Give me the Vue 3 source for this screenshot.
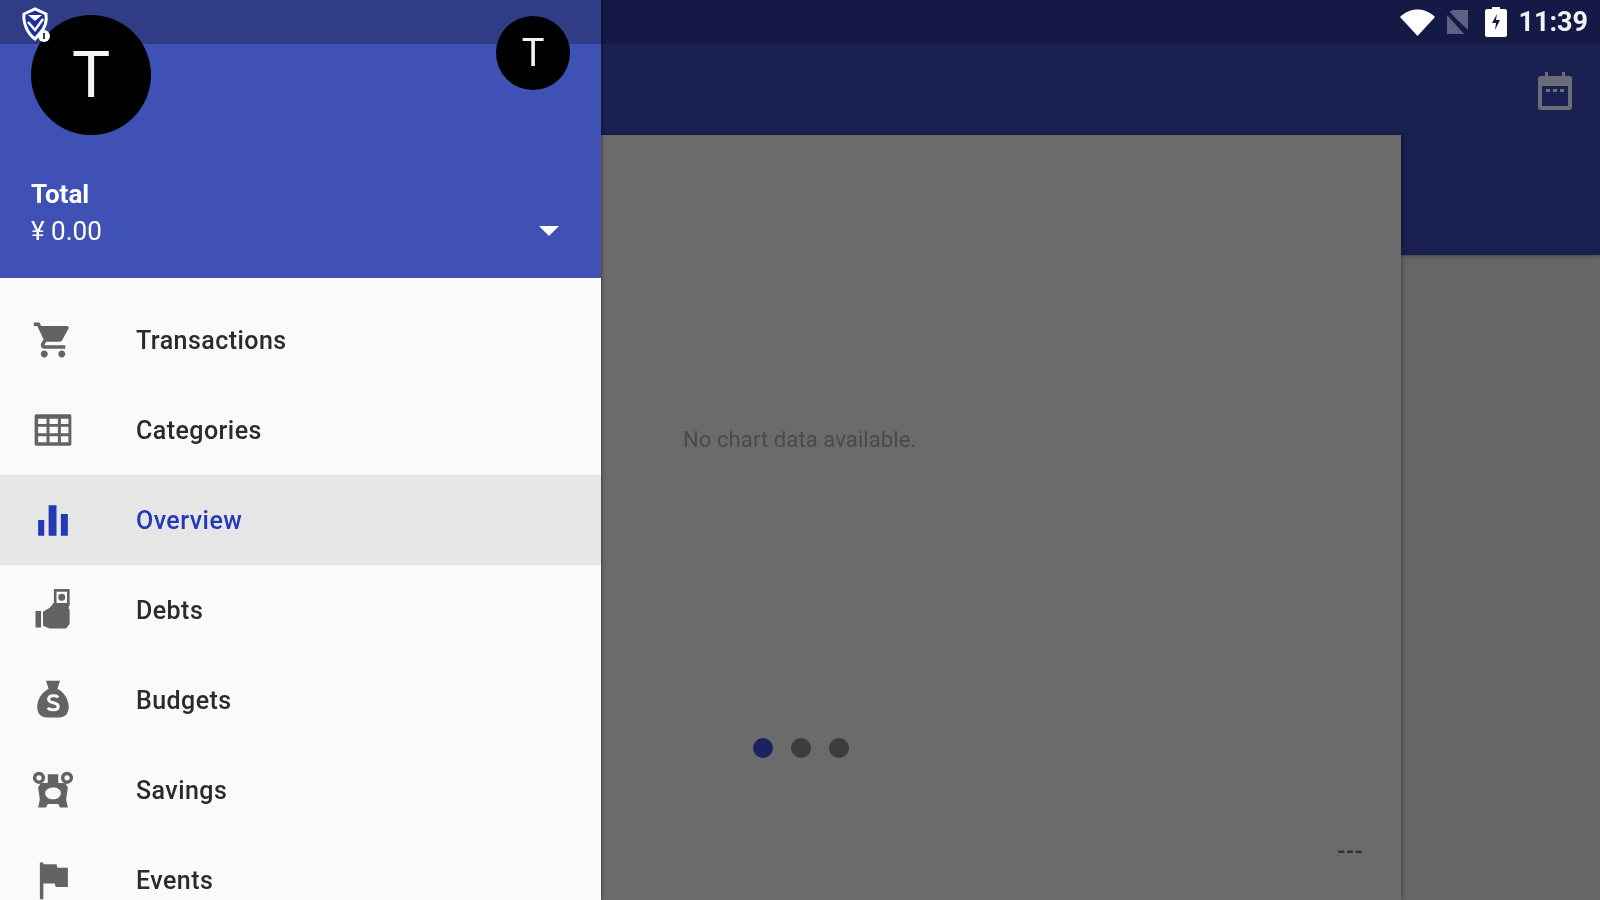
<script setup>
const menu = [
  { label: 'Transactions', icon: 'cart' },
  { label: 'Categories', icon: 'grid' },
  { label: 'Overview', icon: 'bars', active: true },
  { label: 'Debts', icon: 'debt' },
  { label: 'Budgets', icon: 'bag' },
  { label: 'Savings', icon: 'piggy' },
  { label: 'Events', icon: 'flag' }
];
</script>

<template>
  <div class="screen">
    <aside class="drawer">
      <header class="drawer-head">
        <div class="drawer-status"></div>
        <svg class="shield" viewBox="0 0 30 36">
          <path d="M4 7 15 2l11 5c1 7-1 14-6 19l-5 6C8 27 3 17 4 7z" fill="#1f2f9a" stroke="#fff" stroke-width="3" />
          <path d="M8 8h14l-7 6z" fill="#fff" />
          <path d="M8 15l7 8 8-11" fill="none" stroke="#fff" stroke-width="2.500" />
          <circle cx="24" cy="29" r="6" fill="#fff" />
          <path d="M24 26v6" stroke="#1f2f9a" stroke-width="2" />
        </svg>
        <div class="avatars">
          <div class="avatar big">T</div>
          <div class="avatar small">T</div>
        </div>
        <div class="account">
          <div>
            <div class="account-name">Total</div>
            <div class="account-sum">¥ 0.00</div>
          </div>
          <span class="caret"></span>
        </div>
      </header>

      <nav class="menu">
        <div v-for="item in menu" :key="item.label" class="menu-row" :class="{ active: item.active }">
          <svg class="menu-icon" viewBox="0 0 24 24">
            <path v-if="item.icon === 'cart'" d="M7 18c-1.100 0-1.990.9-1.990 2S5.900 22 7 22s2-.9 2-2-.9-2-2-2zM1 2v2h2l3.600 7.590-1.350 2.450c-.16.280-.25.610-.25.960 0 1.100.9 2 2 2h12v-2H7.420c-.14 0-.25-.11-.25-.25l.03-.12.9-1.630h7.450c.75 0 1.410-.41 1.750-1.030l3.580-6.490c.08-.14.120-.31.120-.48 0-.55-.45-1-1-1H5.210l-.94-2H1zm16 16c-1.100 0-1.990.9-1.990 2s.89 2 1.990 2 2-.9 2-2-.9-2-2-2z" />
            <path v-else-if="item.icon === 'grid'" fill-rule="evenodd" d="M2.500 3h19c.6 0 1 .4 1 1v16c0 .6-.4 1-1 1h-19c-.6 0-1-.4-1-1V4c0-.6.4-1 1-1zM3.500 8.500h4.800V5.500H3.500zm6.500 0h4.800V5.500H10zm6.500 0h4.300V5.500h-4.300zM3.500 13.800h4.800v-3.600H3.500zm6.500 0h4.800v-3.600H10zm6.500 0h4.300v-3.600h-4.300zM3.500 19h4.800v-3.500H3.500zm6.500 0h4.800v-3.500H10zm6.500 0h4.300v-3.500h-4.300z" />
            <path v-else-if="item.icon === 'bars'" d="M3.500 12H7v9H3.500zM9.500 3.500H14V21H9.500zM16.500 8.500h4V21h-4z" />
            <template v-else-if="item.icon === 'debt'">
              <path d="M2 12.500h3.200V22H2zM6.300 13l4-2.500 2-2.500h8.700v3l.5 1v8l-2 2.500H10l-3.700-1.500z" />
              <path fill-rule="evenodd" d="M12.500 0h9v9.500h-9zM14 1.500V8h6V1.500zm3 1.200a2 2 0 1 1 0 4 2 2 0 0 1 0-4z" />
            </template>
            <template v-else-if="item.icon === 'bag'">
              <path fill-rule="evenodd" d="M8 1h8l-1.500 4.500c3.800 2 6.500 6 6.500 10.500 0 4-2.500 6-5.500 6h-7C5.500 22 3 20 3 16c0-4.500 2.700-8.500 6.500-10.500z" />
              <path d="M15 10.500c-1-1.300-5.500-1.500-5.500 1 0 2.700 5.500 1.500 5.500 4.200 0 2.500-4.800 2.300-6 .8" fill="none" stroke="#fafafa" stroke-width="1.700" />
            </template>
            <template v-else-if="item.icon === 'piggy'">
              <path fill-rule="evenodd" d="M5 8h14l1.500 2.500-1 7 1 4.500H16l-1-2H9l-1 2H3.500l1-4.500-1-7zm7 2.500c-3 0-4.500 1.800-4.500 3.300S9 17.300 12 17.300s4.500-2 4.500-3.500-1.500-3.300-4.500-3.300z" />
              <path fill-rule="evenodd" d="M4 1.500a3.500 3.500 0 1 1 0 7 3.500 3.500 0 0 1 0-7zm0 2a1.500 1.500 0 1 0 0 3 1.500 1.500 0 0 0 0-3zM20 1.500a3.500 3.500 0 1 1 0 7 3.500 3.500 0 0 1 0-7zm0 2a1.500 1.500 0 1 0 0 3 1.500 1.500 0 0 0 0-3z" />
              <path d="M9 3h6v5H9z" />
            </template>
            <path v-else d="M4.500 2h2v1H14l.5 2h6v11h-7l-.5-2H6.500v9h-2z" />
          </svg>
          <span class="menu-label">{{ item.label }}</span>
        </div>
      </nav>
    </aside>

    <main class="main">
      <div class="topbar">
        <div class="status">
          <svg class="wifi" viewBox="0 0 35 27"><path d="M0 8C10-2 25-2 35 8L17.500 27z" /></svg>
          <svg class="sim" viewBox="0 0 24 26">
            <path d="M7 1h15v20L3 3zM1 6l17 19H1z" />
            <path d="M1 1l22 24" stroke="#141a45" stroke-width="1.500" />
          </svg>
          <svg class="battery" viewBox="0 0 22 30">
            <path d="M7 0h8v2h5c1 0 2 1 2 2v24c0 1-1 2-2 2H2c-1 0-2-1-2-2V4c0-1 1-2 2-2h5z" />
            <path d="M12 7 7 16h4l-1 7 5-10h-4z" fill="#141a45" />
          </svg>
          <span class="time">11:39</span>
        </div>
        <div class="appbar">
          <svg class="calendar" viewBox="0 0 34 38">
            <path fill-rule="evenodd" d="M7 0h3v4h14V0h3v4h4c2 0 3 1 3 3v28c0 2-1 3-3 3H3c-2 0-3-1-3-3V7c0-2 1-3 3-3h4zM4 14v20h26V14z" />
            <path d="M8 17h4v3H8zM15 17h4v3h-4zM22 17h4v3h-4z" />
          </svg>
        </div>
      </div>

      <section class="card">
        <p class="no-data">No chart data available.</p>
        <div class="dots">
          <span class="dot current"></span>
          <span class="dot"></span>
          <span class="dot"></span>
        </div>
        <div class="dash-row"><span class="dash">---</span></div>
      </section>
    </main>
  </div>
</template>

<style>
html, body {
  margin: 0;
  background: #666;
  overflow: hidden;
}
</style>

<style scoped>
.screen {
  display: flex;
  width: 1600px;
  height: 900px;
  overflow: hidden;
  background: #666;
  font-family: Roboto, "Liberation Sans", sans-serif;
  filter: blur(.5px);
}

.drawer {
  position: relative;
  z-index: 2;
  width: 601px;
  height: 900px;
  flex: none;
  overflow: hidden;
  background: #fafafa;
  box-shadow: 1px 0 3px rgba(0, 0, 0, .4);
}

.drawer-head {
  position: relative;
  height: 278px;
  padding: 15px 31px 0 31px;
  box-sizing: border-box;
  background: #3f51b5;
}

.drawer-status {
  position: absolute;
  top: 0;
  left: 0;
  right: 0;
  height: 44px;
  background: #303c85;
}

.shield {
  position: absolute;
  top: 7px;
  left: 20px;
  z-index: 1;
  width: 30px;
  height: 36px;
}

.avatars {
  position: relative;
  display: flex;
  justify-content: space-between;
  align-items: flex-start;
}

.avatar {
  display: flex;
  align-items: center;
  justify-content: center;
  border-radius: 50%;
  background: #000;
  color: #f4f4f4;
  font-weight: 400;
}

.big {
  width: 120px;
  height: 120px;
  font-size: 64px;
}

.small {
  width: 74px;
  height: 74px;
  margin-top: 1px;
  font-size: 38px;
}

.account {
  display: flex;
  justify-content: space-between;
  align-items: flex-end;
  margin-top: 43px;
  color: #fff;
}

.account-name {
  font-size: 26px;
  line-height: 32px;
  font-weight: 700;
}

.account-sum {
  margin-top: 5px;
  font-size: 26px;
  line-height: 32px;
}

.caret {
  width: 0;
  height: 0;
  margin: 0 11px 11px 0;
  border-left: 10px solid transparent;
  border-right: 10px solid transparent;
  border-top: 10px solid #fff;
}

.menu {
  padding-top: 17px;
}

.menu-row {
  display: flex;
  align-items: center;
  height: 90px;
  padding-left: 32px;
  color: #2b2b2b;
}

.menu-row.active {
  background: #e6e6e6;
  color: #2439b5;
}

.menu-icon {
  width: 42px;
  height: 42px;
  flex: none;
  fill: #636363;
}

.active .menu-icon {
  fill: #2439b5;
}

.menu-label {
  margin-left: 62px;
  font-size: 25px;
  font-weight: 500;
  letter-spacing: .45px;
}

.main {
  flex: 1;
  min-width: 0;
}

.topbar {
  height: 255px;
  background: #1a204f;
  box-shadow: 0 1px 3px rgba(0, 0, 0, .3);
}

.status {
  display: flex;
  align-items: center;
  justify-content: flex-end;
  height: 44px;
  padding-right: 12px;
  background: #141a45;
}

.wifi {
  width: 35px;
  height: 27px;
  fill: #fff;
}

.sim {
  width: 24px;
  height: 26px;
  margin-left: 11px;
  fill: #5d6285;
}

.battery {
  width: 22px;
  height: 30px;
  margin-left: 15px;
  fill: #fff;
}

.time {
  margin-left: 11px;
  color: #f2f2f2;
  font-size: 27px;
  font-weight: 700;
}

.appbar {
  display: flex;
  justify-content: flex-end;
  padding: 28px 28px 0 0;
}

.calendar {
  width: 34px;
  height: 38px;
  fill: #6b6d78;
}

.card {
  position: relative;
  display: flex;
  flex-direction: column;
  width: 800px;
  height: 765px;
  margin-top: -120px;
  box-sizing: border-box;
  padding: 293px 38px 0 82px;
  background: #6b6b6b;
  box-shadow: 2px 0 4px rgba(0, 0, 0, .25);
}

.no-data {
  margin: 0;
  color: #4a4a4a;
  font-size: 22px;
  line-height: 24px;
  letter-spacing: .1px;
}

.dots {
  display: flex;
  gap: 18px;
  margin: 286px 0 0 70px;
}

.dot {
  width: 20px;
  height: 20px;
  border-radius: 50%;
  background: #3d3d3d;
}

.dot.current {
  background: #1a2260;
}

.dash-row {
  display: flex;
  justify-content: flex-end;
  margin-top: 82px;
}

.dash {
  color: #333;
  font-size: 22px;
  line-height: 24px;
  font-weight: 700;
}
</style>
